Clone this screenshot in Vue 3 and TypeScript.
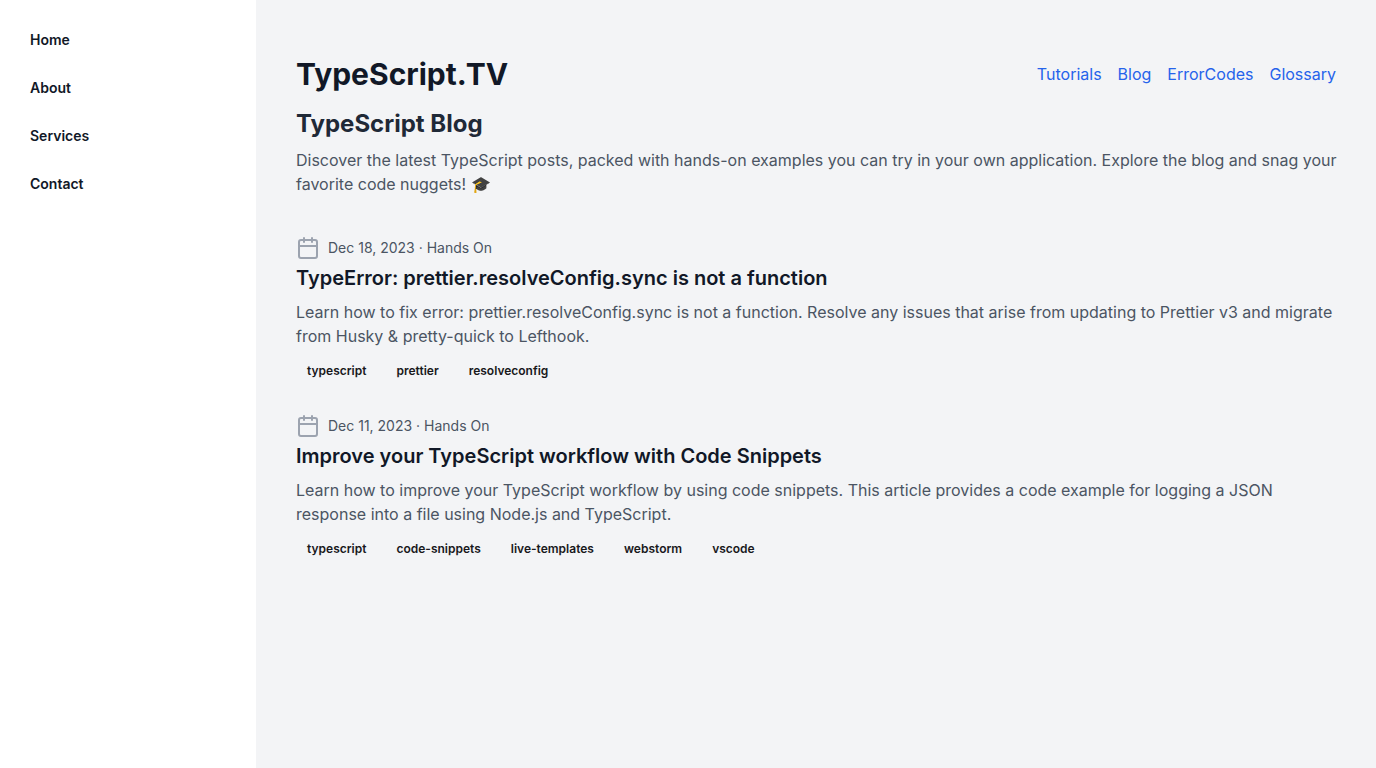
<script setup lang="ts">
interface Post {
  date: string
  category: string
  title: string
  summary: string
  tags: string[]
}

const menu: string[] = ['Home', 'About', 'Services', 'Contact']
const links: string[] = ['Tutorials', 'Blog', 'ErrorCodes', 'Glossary']

const posts: Post[] = [
  {
    date: 'Dec 18, 2023',
    category: 'Hands On',
    title: 'TypeError: prettier.resolveConfig.sync is not a function',
    summary:
      'Learn how to fix error: prettier.resolveConfig.sync is not a function. Resolve any issues that arise from updating to Prettier v3 and migrate from Husky & pretty-quick to Lefthook.',
    tags: ['typescript', 'prettier', 'resolveconfig'],
  },
  {
    date: 'Dec 11, 2023',
    category: 'Hands On',
    title: 'Improve your TypeScript workflow with Code Snippets',
    summary:
      'Learn how to improve your TypeScript workflow by using code snippets. This article provides a code example for logging a JSON response into a file using Node.js and TypeScript.',
    tags: ['typescript', 'code-snippets', 'live-templates', 'webstorm', 'vscode'],
  },
]
</script>

<template>
  <div class="page">
    <aside class="sidebar">
      <nav class="menu" aria-label="Main">
        <a v-for="item in menu" :key="item" class="menu-item" href="#">{{ item }}</a>
      </nav>
    </aside>
    <main class="content">
      <header class="header">
        <h1 class="brand">TypeScript.TV</h1>
        <nav class="links" aria-label="Sections">
          <a v-for="link in links" :key="link" class="link" href="#">{{ link }}</a>
        </nav>
      </header>
      <section class="intro">
        <h2 class="intro-title">TypeScript Blog</h2>
        <p class="text">
          Discover the latest TypeScript posts, packed with hands-on examples you can try in your own
          application. Explore the blog and snag your favorite code nuggets! 🎓
        </p>
      </section>
      <section class="posts">
        <article v-for="post in posts" :key="post.title" class="post">
          <div class="meta">
            <svg class="calendar" viewBox="0 0 24 24" aria-hidden="true">
              <rect x="3" y="4" width="18" height="18" rx="2" ry="2" />
              <line x1="16" y1="2" x2="16" y2="6" />
              <line x1="8" y1="2" x2="8" y2="6" />
              <line x1="3" y1="10" x2="21" y2="10" />
            </svg>
            <span>{{ post.date }} · {{ post.category }}</span>
          </div>
          <h3 class="post-title">{{ post.title }}</h3>
          <p class="text">{{ post.summary }}</p>
          <div class="tags">
            <span v-for="tag in post.tags" :key="tag" class="tag">{{ tag }}</span>
          </div>
        </article>
      </section>
    </main>
  </div>
</template>

<style>
body {
  margin: 0;
}
</style>

<style scoped>
.page {
  display: flex;
  min-height: 100vh;
  background: #f3f4f6;
  color: #111827;
  font-family: Inter, 'Liberation Sans', sans-serif;
  font-size: 16px;
  line-height: 24px;
}

h1,
h2,
h3,
p {
  margin: 0;
}

a {
  text-decoration: none;
}

.sidebar {
  flex: 0 0 256px;
  background: #ffffff;
}

.menu {
  display: flex;
  flex-direction: column;
  align-items: flex-start;
  gap: 8px;
  padding: 20px 14px;
}

.menu-item {
  padding: 10px 16px;
  font-size: 14px;
  line-height: 20px;
  font-weight: 600;
  color: #111827;
}

.content {
  flex: 1;
  min-width: 0;
  padding: 56px 36px 40px 40px;
}

.header {
  display: flex;
  align-items: center;
  justify-content: space-between;
  padding-right: 4px;
}

.brand {
  font-size: 30px;
  line-height: 36px;
  font-weight: 700;
}

.links {
  display: flex;
  gap: 16px;
}

.link {
  color: #2563eb;
}

.intro {
  margin-top: 16px;
}

.intro-title {
  margin-bottom: 8px;
  font-size: 24px;
  line-height: 32px;
  font-weight: 700;
  color: #1f2937;
}

.text {
  color: #4b5563;
}

.posts {
  display: flex;
  flex-direction: column;
  gap: 32px;
  margin-top: 40px;
}

.meta {
  display: flex;
  align-items: center;
  gap: 8px;
  font-size: 14px;
  line-height: 20px;
  color: #4b5563;
}

.calendar {
  width: 24px;
  height: 24px;
  fill: none;
  stroke: #9ca3af;
  stroke-width: 2;
  stroke-linecap: round;
  stroke-linejoin: round;
}

.post-title {
  margin: 4px 0 8px;
  font-size: 20px;
  line-height: 28px;
  font-weight: 600;
}

.tags {
  display: flex;
  flex-wrap: wrap;
  gap: 8px;
  margin-top: 12px;
}

.tag {
  padding: 3px 11px;
  font-size: 12px;
  line-height: 16px;
  font-weight: 600;
  color: #18181b;
}
</style>
